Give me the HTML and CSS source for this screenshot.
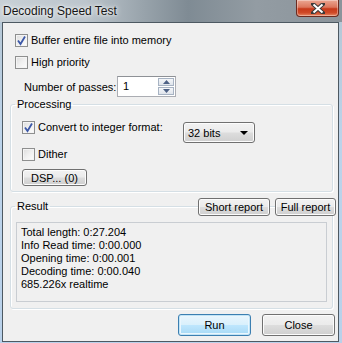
FILE: index.html
```html
<!DOCTYPE html>
<html lang="en">
<head>
    <meta charset="UTF-8">
    <title>Decoding Speed Test</title>
    <link rel="stylesheet" href="styles.css">
</head>
<body>
    <div class="window">
        <div class="titlebar">
            <span class="title">Decoding Speed Test</span>
            <span class="close-btn">
                <svg width="14" height="11" viewBox="0 0 14 11">
                    <path d="M2 1 L12 10 M12 1 L2 10" stroke="#3a3a3a" stroke-width="4" stroke-linecap="square"/>
                    <path d="M2.5 1.5 L11.5 9.5 M11.5 1.5 L2.5 9.5" stroke="#fff" stroke-width="2"/>
                </svg>
            </span>
        </div>
        <div class="client">
            <!-- Tuỳ chọn chung -->
            <div class="check first">
                <span class="box checked"><svg width="11" height="11" viewBox="0 0 11 11"><path d="M2 5.5 L4.5 9 L9 1.5" fill="none" stroke="#3c58a8" stroke-width="1.8"/></svg></span>
                <span>Buffer entire file into memory</span>
            </div>
            <div class="check second">
                <span class="box"></span>
                <span>High priority</span>
            </div>
            <div class="passes">
                <span class="passes-label">Number of passes:</span>
                <span class="spin">
                    <span class="spin-val">1</span>
                    <span class="spin-btns">
                        <span class="spin-btn"><svg width="7" height="4" viewBox="0 0 7 4"><path d="M0 4 L3.5 0 L7 4 Z" fill="#4d6185"/></svg></span>
                        <span class="spin-btn"><svg width="7" height="4" viewBox="0 0 7 4"><path d="M0 0 L3.5 4 L7 0 Z" fill="#4d6185"/></svg></span>
                    </span>
                </span>
            </div>

            <fieldset class="group processing">
                <legend>Processing</legend>
                <div class="conv-row">
                    <div class="check">
                        <span class="box checked"><svg width="11" height="11" viewBox="0 0 11 11"><path d="M2 5.5 L4.5 9 L9 1.5" fill="none" stroke="#3c58a8" stroke-width="1.8"/></svg></span>
                        <span>Convert to integer format:</span>
                    </div>
                    <div class="select">
                        <span>32 bits</span>
                        <svg width="8" height="4" viewBox="0 0 8 4"><path d="M0 0 L8 0 L4 4 Z" fill="#000"/></svg>
                    </div>
                </div>
                <div class="check dither">
                    <span class="box"></span>
                    <span>Dither</span>
                </div>
                <button class="btn dsp">DSP... (0)</button>
            </fieldset>

            <div class="result-area">
                <fieldset class="group result">
                    <legend>Result</legend>
                    <div class="report">
                        <div>Total length: 0:27.204</div>
                        <div>Info Read time: 0:00.000</div>
                        <div>Opening time: 0:00.001</div>
                        <div>Decoding time: 0:00.040</div>
                        <div>685.226x realtime</div>
                    </div>
                </fieldset>
                <div class="report-buttons">
                    <button class="btn short">Short report</button>
                    <button class="btn full">Full report</button>
                </div>
            </div>

            <div class="footer">
                <button class="btn default run">Run</button>
                <button class="btn close">Close</button>
            </div>
        </div>
    </div>
</body>
</html>
```

FILE: styles.css
```css
html, body {
    margin: 0;
    padding: 0;
}
body {
    width: 342px;
    height: 343px;
    overflow: hidden;
    font-family: "Liberation Sans", Arial, sans-serif;
    font-size: 11px;
    color: #000;
}
.window {
    width: 342px;
    height: 343px;
    background: linear-gradient(180deg, #b5c6d3 0%, #bcd3ea 40%, #b9d1ea 100%);
    display: flex;
    flex-direction: column;
}
.titlebar {
    height: 22px;
    flex: none;
    display: flex;
    justify-content: space-between;
    align-items: flex-start;
    background: linear-gradient(90deg, #c8d0d6 0%, #bcc5cc 25%, #98a3ab 42%, #7f8b94 55%, #939ca3 75%, #8b949b 100%);
}
.title {
    font-size: 12px;
    color: #151515;
    padding: 4px 0 0 3px;
    text-shadow: 0 0 6px #fff, 0 0 3px #fff;
}
.close-btn {
    width: 43px;
    height: 17px;
    margin-right: 3px;
    box-sizing: border-box;
    border: 1px solid #6b2b20;
    border-top: none;
    border-radius: 0 0 4px 4px;
    background: linear-gradient(180deg, #eba793 0%, #dc765c 45%, #c7391a 55%, #cf4a28 80%, #e88a66 100%);
    display: flex;
    justify-content: center;
    align-items: center;
    box-shadow: inset 0 0 0 1px rgba(255, 255, 255, 0.35);
}
.client {
    flex: 1;
    margin: 0 3px 1px 2px;
    border: 1px solid #4d5962;
    background: #f0f0f0;
    display: flex;
    flex-direction: column;
}
.check {
    display: flex;
    align-items: center;
    gap: 3px;
    height: 13px;
    line-height: 13px;
}
.check.first {
    margin: 11px 0 0 12px;
}
.check.second {
    margin: 9px 0 0 12px;
}
.box {
    width: 13px;
    height: 13px;
    box-sizing: border-box;
    border: 1px solid #8e8f8f;
    background: linear-gradient(135deg, #dcdcdc 0%, #f0f0f0 50%, #fdfdfd 100%);
    box-shadow: inset 0 0 0 1px #f4f4f4;
    display: flex;
    justify-content: center;
    align-items: center;
    flex: none;
}
.passes {
    display: flex;
    align-items: center;
    margin: 7px 0 0 21px;
}
.passes-label {
    width: 93px;
}
.spin {
    width: 59px;
    height: 21px;
    box-sizing: border-box;
    border: 1px solid #abadb3;
    border-top-color: #8e9196;
    background: #fff;
    display: flex;
    justify-content: space-between;
}
.spin-val {
    padding: 3px 0 0 5px;
}
.spin-btns {
    width: 16px;
    display: flex;
    flex-direction: column;
    gap: 1px;
    padding: 1px 1px 1px 0;
}
.spin-btn {
    flex: 1;
    border: 1px solid #a7b3c3;
    background: linear-gradient(180deg, #f4f6f9 0%, #dfe4eb 100%);
    display: flex;
    justify-content: center;
    align-items: center;
}
.group {
    border: 1px solid #d5dfe5;
    border-radius: 3px;
    box-shadow: inset 1px 1px 0 #fff, 1px 1px 0 #fff;
    padding: 0;
    min-width: 0;
}
.group legend {
    margin-left: 4px;
    padding: 0 2px;
    line-height: 13px;
}
.processing {
    margin: 1px 5px 0 7px;
    padding-bottom: 5px;
}
.conv-row {
    display: flex;
    align-items: flex-start;
    margin: 10px 0 0 11px;
}
.conv-row .check {
    width: 161px;
}
.select {
    width: 72px;
    height: 21px;
    box-sizing: border-box;
    margin-top: 1px;
    border: 1px solid #707070;
    border-radius: 3px;
    background: linear-gradient(180deg, #f2f2f2 0%, #ebebeb 49%, #dddddd 51%, #cfcfcf 100%);
    box-shadow: inset 0 0 0 1px #fcfcfc;
    display: flex;
    justify-content: space-between;
    align-items: center;
    padding: 0 6px 0 4px;
}
.check.dither {
    margin: 5px 0 0 11px;
}
.btn {
    font-family: "Liberation Sans", Arial, sans-serif;
    font-size: 11px;
    color: #000;
    box-sizing: border-box;
    border: 1px solid #707070;
    border-radius: 3px;
    background: linear-gradient(180deg, #f2f2f2 0%, #ebebeb 49%, #dddddd 51%, #cfcfcf 100%);
    box-shadow: inset 0 0 0 1px #fcfcfc;
    padding: 0;
    margin: 0;
}
.dsp {
    width: 65px;
    height: 17px;
    margin: 8px 0 0 11px;
    display: block;
}
.result-area {
    position: relative;
    margin: 8px 5px 0 7px;
}
.result {
    margin: 0;
    padding-bottom: 6px;
}
.report {
    height: 80px;
    margin: 9px 5px 0 5px;
    box-sizing: border-box;
    border: 1px solid #c9cdd2;
    background: #f0f0f0;
    padding: 3px 0 0 4px;
    line-height: 13px;
}
.report-buttons {
    position: absolute;
    top: -2px;
    right: -3px;
    display: flex;
    gap: 5px;
}
.short {
    width: 72px;
    height: 18px;
}
.full {
    width: 61px;
    height: 18px;
}
.footer {
    display: flex;
    justify-content: flex-end;
    gap: 11px;
    margin: 5px 3px 0 0;
}
.run, .close {
    width: 73px;
    height: 22px;
}
.default {
    border-color: #3c7fb1;
    background: linear-gradient(180deg, #eaf6fd 0%, #d9f0fc 49%, #bee6fd 51%, #a7d9f5 100%);
    box-shadow: inset 0 0 0 1px #c2e4f6, inset 0 0 0 2px #eaf6fd;
}
```
